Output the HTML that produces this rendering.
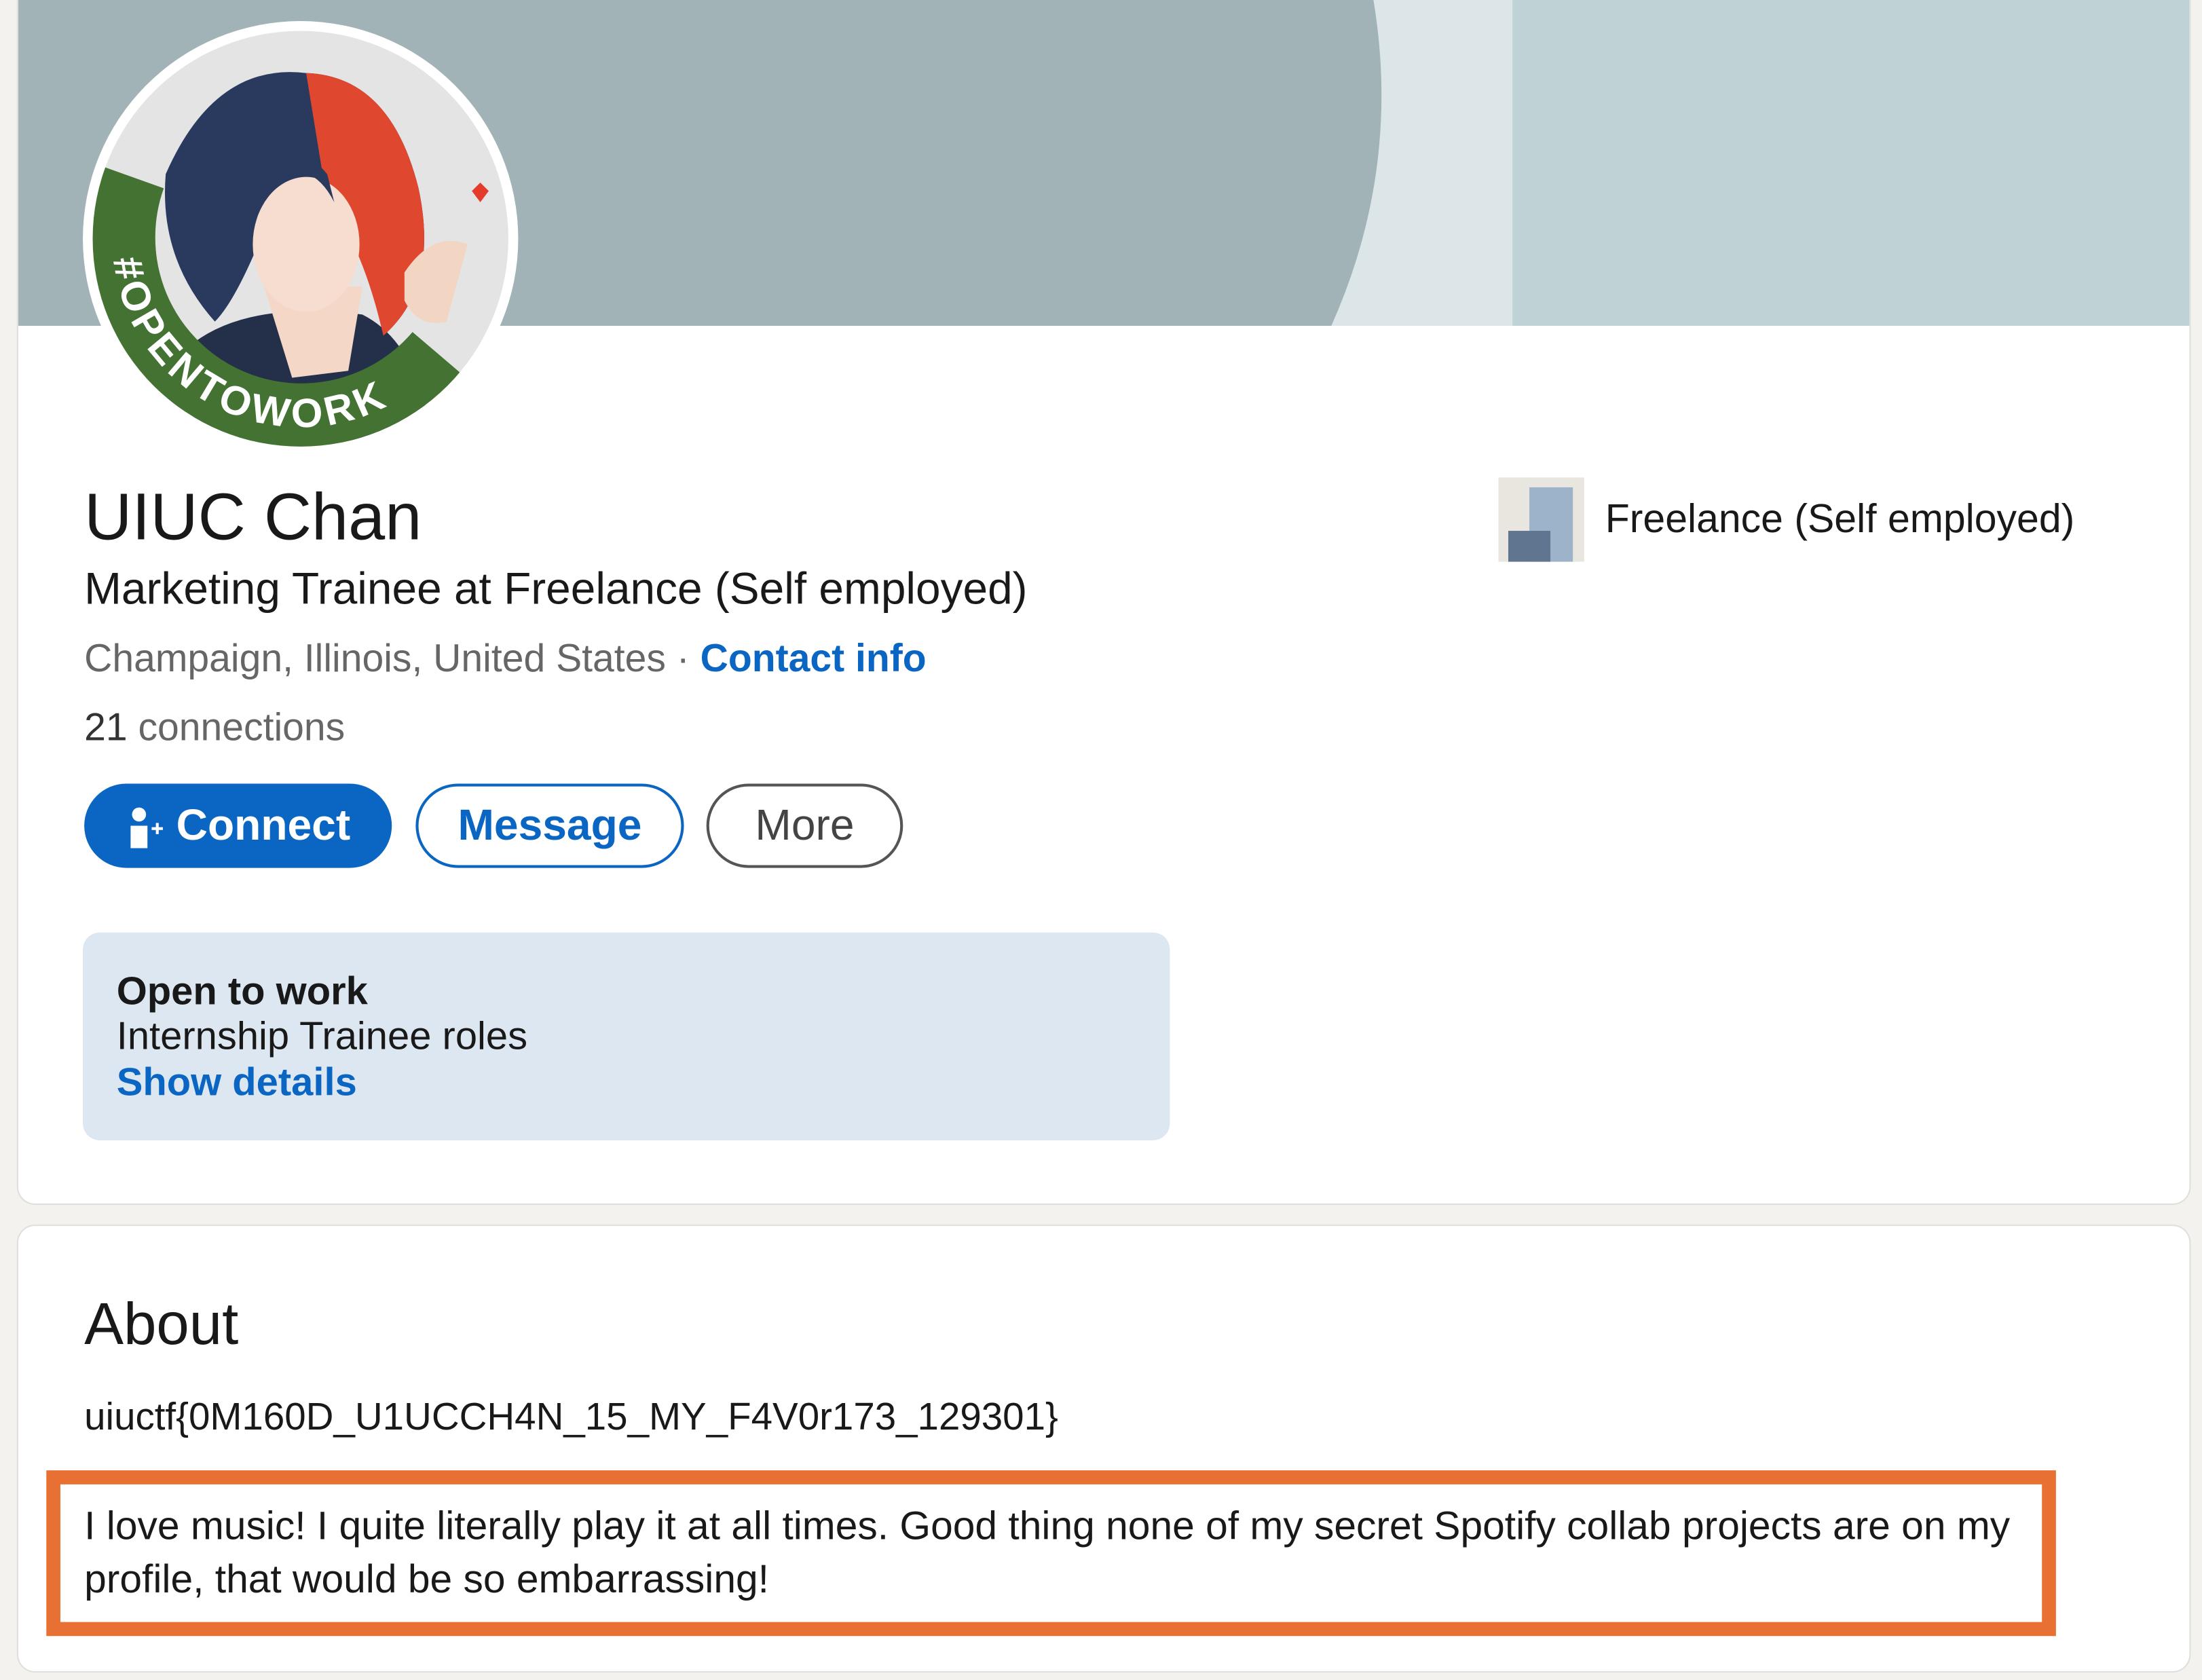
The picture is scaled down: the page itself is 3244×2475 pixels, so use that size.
<!DOCTYPE html>
<html><head><meta charset="utf-8">
<style>
html,body{margin:0;padding:0;background:#f3f2ef;width:3244px;height:2475px;overflow:hidden}
#w{position:absolute;left:0;top:0;width:1568px;height:1196px;transform:scale(2.0689);transform-origin:0 0;font-family:"Liberation Sans",sans-serif;color:#191919}
.card{position:absolute;background:#fff;border-radius:12px;box-shadow:0 0 0 1px #e0dfdc;overflow:hidden}
.a{position:absolute;white-space:nowrap}
.btn{position:absolute;top:558px;height:60px;border-radius:31px;font-size:31px;display:flex;align-items:center;justify-content:center;box-sizing:border-box}
</style></head><body>
<div id="w">
<div class="card" style="left:13px;top:0;width:1546px;height:857px;border-top-left-radius:0;border-top-right-radius:0">
  <div class="a" style="left:0;top:0;width:1546px;height:232px;background:#bfd3d7"></div>
  <div class="a" style="left:0;top:0;width:1064px;height:232px;background:#dce6e8"></div>
  <svg class="a" style="left:0;top:0" width="1000" height="232"><path d="M0 0 H965 Q985 120 935 232 H0Z" fill="#a1b3b7"/></svg>
  <div class="a" style="left:1054px;top:340px;width:61px;height:60px;background:#e9e5df"></div>
  <div class="a" style="left:1076px;top:347px;width:31px;height:53px;background:#9db3c9"></div>
  <div class="a" style="left:1061px;top:378px;width:30px;height:22px;background:#5f7590"></div>
  <div class="a" style="left:1130px;top:354px;font-size:28.5px">Freelance (Self employed)</div>
  <div class="a" style="left:47px;top:340px;font-size:47px">UIUC Chan</div>
  <div class="a" style="left:47px;top:401px;font-size:31.8px">Marketing Trainee at Freelance (Self employed)</div>
  <div class="a" style="left:47px;top:453px;font-size:27.6px;color:#666">Champaign, Illinois, United States · <span style="color:#0a66c2;font-weight:bold">Contact info</span></div>
  <div class="a" style="left:47px;top:502px;font-size:27.6px;color:#666"><span style="color:#333">21</span> connections</div>
  <div class="btn" style="left:47px;width:219px;background:#0a66c2;color:#fff;font-weight:bold"><svg width="30" height="32" viewBox="0 0 30 32" style="margin-right:6px"><circle cx="9" cy="8" r="5" fill="#fff"/><path d="M3 16h12v16H3z" fill="#fff"/><path d="M18 18h8M22 14v8" stroke="#fff" stroke-width="2"/></svg>Connect</div>
  <div class="btn" style="left:283px;width:191px;border:2px solid #0a66c2;color:#0a66c2;font-weight:bold">Message</div>
  <div class="btn" style="left:490px;width:140px;border:2px solid #555;color:#444">More</div>
  <div class="a" style="left:46px;top:664px;width:774px;height:148px;background:#dde7f1;border-radius:12px"></div>
  <div class="a" style="left:70px;top:689px;font-size:28px;font-weight:bold;line-height:33px">Open to work</div>
  <div class="a" style="left:70px;top:721px;font-size:28px;line-height:33px">Internship Trainee roles</div>
  <div class="a" style="left:70px;top:754px;font-size:28px;line-height:33px;color:#0a66c2;font-weight:bold">Show details</div>
</div>
<svg class="a" style="left:58px;top:14px" width="312" height="312" viewBox="0 0 312 312">
  <defs><clipPath id="c"><circle cx="156" cy="156" r="148"/></clipPath>
  <path id="arc" d="M22.5 167.7 A134 134 0 0 0 250.8 250.8"/></defs>
  <circle cx="156" cy="156" r="155" fill="#fff"/>
  <g clip-path="url(#c)">
    <rect width="312" height="312" fill="#e4e4e4"/>
    <path d="M80 230 Q120 200 200 210 Q240 230 250 300 L80 300Z" fill="#243049"/>
    <path d="M130 190 L200 190 L190 250 L150 255Z" fill="#f5d7c8"/>
    <path d="M60 110 Q95 30 160 38 Q220 40 240 120 Q255 190 215 225 Q200 160 185 140 L130 150 Q110 200 95 215 Q55 170 60 110Z" fill="#2a3a5e"/>
    <path d="M160 38 Q220 40 240 120 Q255 190 215 225 Q200 160 175 130Z" fill="#e0472f"/>
    <ellipse cx="160" cy="160" rx="38" ry="48" fill="#f7ddd0"/>
    <path d="M115 120 Q160 90 180 130 L175 110 Q150 80 120 100Z" fill="#2a3a5e"/>
    <path d="M230 180 Q250 150 275 160 L260 215 Q240 220 230 200Z" fill="#f3d5c4"/>
    <path d="M278 122 l6 -6 6 6 -6 8z" fill="#e53b2a"/>
    <path d="M36 112 A128 128 0 0 0 254 238" fill="none" stroke="#437233" stroke-width="48"/>
  </g>
  <text font-family="Liberation Sans,sans-serif" font-weight="bold" font-size="29" fill="#fff" letter-spacing="3"><textPath href="#arc" startOffset="1%">#OPENTOWORK</textPath></text>
</svg>
<div class="card" style="left:13px;top:873px;width:1546px;height:317px">
  <div class="a" style="left:47px;top:46px;font-size:42px">About</div>
  <div class="a" style="left:47px;top:120px;font-size:27.3px">uiuctf{0M160D_U1UCCH4N_15_MY_F4V0r173_129301}</div>
  <div class="a" style="left:20px;top:174px;width:1411px;height:98px;border:10px solid #e87032"></div>
  <div class="a" style="left:47px;top:195px;font-size:28.4px;line-height:38px;white-space:normal;width:1400px">I love music! I quite literally play it at all times. Good thing none of my secret Spotify collab projects are on my profile, that would be so embarrassing!</div>
</div>
</div>
</body></html>
